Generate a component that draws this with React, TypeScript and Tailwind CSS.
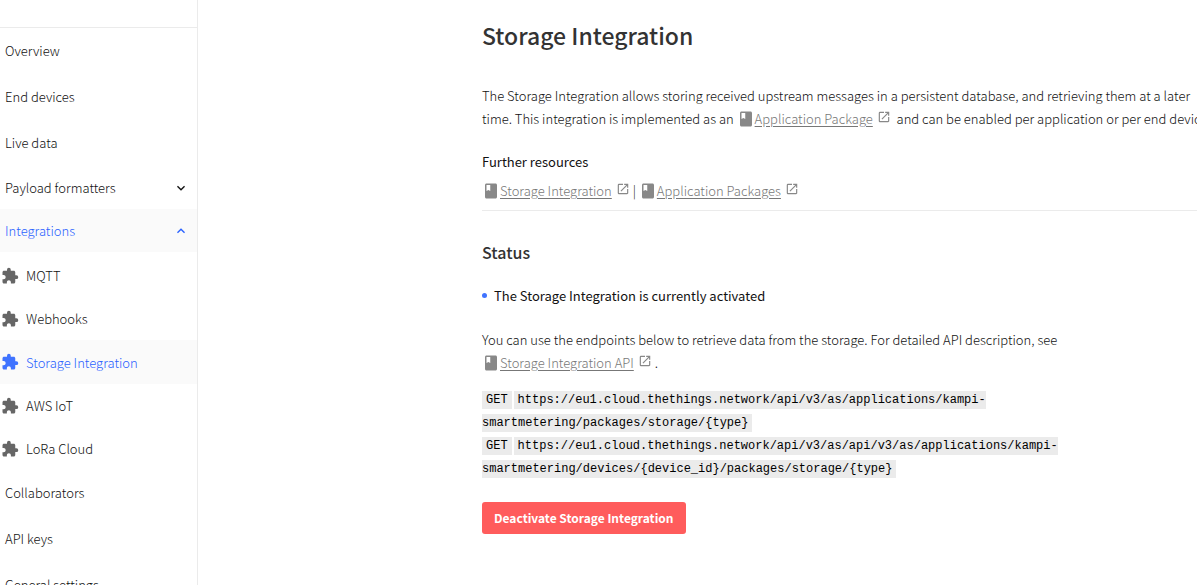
import { ReactNode } from "react";
import { MdBook, MdExpandLess, MdExpandMore, MdExtension, MdOpenInNew } from "react-icons/md";
import clsx from "clsx";

const integrations = ["MQTT", "Webhooks", "Storage Integration", "AWS IoT", "LoRa Cloud"];

const endpoints = [
    "https://eu1.cloud.thethings.network/api/v3/as/applications/kampi-smartmetering/packages/storage/{type}",
    "https://eu1.cloud.thethings.network/api/v3/as/api/v3/as/applications/kampi-smartmetering/devices/{device_id}/packages/storage/{type}",
];

function NavLink({ children }: { children: ReactNode }) {
    return (
        <a href="#" className="flex h-[46px] items-center pb-[2px] pl-[5px]">
            {children}
        </a>
    );
}

function NavGroup({ label, open }: { label: string; open?: boolean }) {
    return (
        <button
            type="button"
            aria-expanded={!!open}
            className={clsx(
                "flex h-[43px] w-full items-center justify-between pl-[5px] pr-2",
                open && "bg-[#fafafa] text-[#2a62ff]"
            )}
        >
            {label}
            {open ? <MdExpandLess size={16} /> : <MdExpandMore size={16} />}
        </button>
    );
}

function Sidebar() {
    return (
        <aside className="w-[198px] shrink-0 border-r border-[#ebebeb]">
            <div className="h-7 border-b border-[#ebebeb]" />
            <nav>
                <NavLink>Overview</NavLink>
                <NavLink>End devices</NavLink>
                <NavLink>Live data</NavLink>
                <NavGroup label="Payload formatters" />
                <NavGroup label="Integrations" open />
                <ul className="pt-[2px]">
                    {integrations.map((name) => {
                        const active = name === "Storage Integration";
                        return (
                            <li key={name}>
                                <a
                                    href="#"
                                    className={clsx(
                                        "flex items-center gap-[7px] pl-px",
                                        active ? "h-11 bg-[#fafafa] text-[#2a62ff]" : "h-[43px]"
                                    )}
                                >
                                    <MdExtension size={18} className={active ? "text-[#3f73ff]" : "text-[#666666]"} />
                                    {name}
                                </a>
                            </li>
                        );
                    })}
                </ul>
                <NavLink>Collaborators</NavLink>
                <NavLink>API keys</NavLink>
                <NavLink>General settings</NavLink>
            </nav>
        </aside>
    );
}

function DocLink({ children }: { children: ReactNode }) {
    return (
        <a href="#" className="whitespace-nowrap text-[#777777]">
            <MdBook size={18} className="inline align-text-bottom text-[#888888]" />
            <span className="underline underline-offset-2">{children}</span>
            <MdOpenInNew size={14} className="ml-1 inline align-baseline text-[#888888]" />
        </a>
    );
}

function Code({ children }: { children: ReactNode }) {
    return <code className="bg-[#ebebeb] px-1 py-[2px] font-['Liberation_Mono',monospace] text-[12px]">{children}</code>;
}

function App() {
    return (
        <div className="flex h-screen overflow-hidden bg-white font-['Noto_Sans_CJK_SC','Source_Sans_Pro',sans-serif] text-[13px] font-light leading-[23px] text-[#111111]">
            <Sidebar />
            <main className="min-w-0 flex-1 overflow-hidden pl-[284px]">
                <div className="w-[740px]">
                    <h1 className="pt-5 text-[23px] font-medium leading-[30px] text-[#333333]">Storage Integration</h1>
                    <p className="mt-[34px]">
                        The Storage Integration allows storing received upstream messages in a persistent database, and
                        retrieving them at a later time. This integration is implemented as an{" "}
                        <DocLink>Application Package</DocLink>&nbsp; and can be enabled per application or per end
                        device.
                    </p>
                    <h4 className="mt-5 font-normal">Further resources</h4>
                    <div className="mt-[6px] border-b border-[#ebebeb] pb-2">
                        <DocLink>Storage Integration</DocLink> | <DocLink>Application Packages</DocLink>
                    </div>
                    <h3 className="mt-[30px] text-[16px] font-medium text-[#333333]">Status</h3>
                    <div className="mt-5 flex items-center gap-[7px] font-normal">
                        <span className="size-[5px] rounded-full bg-[#3f73ff]" />
                        The Storage Integration is currently activated
                    </div>
                    <p className="mt-[21px]">
                        You can use the endpoints below to retrieve data from the storage. For detailed API description,
                        see <DocLink>Storage Integration API</DocLink> .
                    </p>
                    <div className="mt-[15px] font-['Liberation_Mono',monospace] text-[12px] font-normal text-black">
                        {endpoints.map((url) => (
                            <div key={url}>
                                <Code>GET</Code>
                                <span className="ml-[2px]">
                                    <Code>{url}</Code>
                                </span>
                            </div>
                        ))}
                    </div>
                    <button
                        type="button"
                        className="mt-[21px] h-8 rounded-[3px] bg-[#ff5c5c] px-3 pb-px text-[12px] font-bold text-white"
                    >
                        Deactivate Storage Integration
                    </button>
                </div>
            </main>
        </div>
    );
}

export default App;
